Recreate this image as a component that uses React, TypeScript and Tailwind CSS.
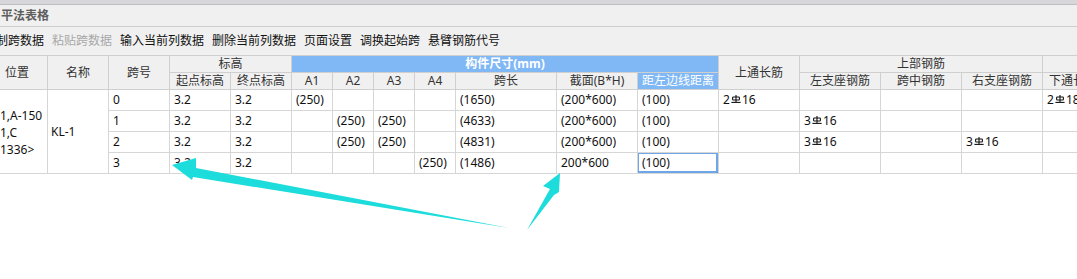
import React from "react";

const font = "font-['Noto_Sans','Noto_Sans_CJK_SC',sans-serif]";

const toolbar = [
  { label: "制跨数据", disabled: false },
  { label: "粘贴跨数据", disabled: true },
  { label: "输入当前列数据", disabled: false },
  { label: "删除当前列数据", disabled: false },
  { label: "页面设置", disabled: false },
  { label: "调换起始跨", disabled: false },
  { label: "悬臂钢筋代号", disabled: false },
];

// rebar grade symbol (HRB400)
function Rebar() {
  return (
    <svg width="10" height="8" viewBox="0 0 10 8" className="mb-[3px] mx-[1px] inline-block" fill="none" stroke="#111" strokeWidth="1.1">
      <path d="M5 0 V7.5" />
      <rect x="1.6" y="2" width="6.8" height="3" rx="0.8" />
      <path d="M0.4 7.4 H9.6" />
    </svg>
  );
}

function Bar({ n, d }: { n: string; d: string }) {
  return (
    <span className="inline-flex items-center">
      {n}
      <Rebar />
      {d}
    </span>
  );
}

type Cell = React.ReactNode;

const rows: Cell[][] = [
  ["0", "3.2", "3.2", "(250)", "", "", "", "(1650)", "(200*600)", "(100)", <Bar n="2" d="16" />, "", "", "", <Bar n="2" d="18" />],
  ["1", "3.2", "3.2", "", "(250)", "(250)", "", "(4633)", "(200*600)", "(100)", "", <Bar n="3" d="16" />, "", "", ""],
  ["2", "3.2", "3.2", "", "(250)", "(250)", "", "(4831)", "(200*600)", "(100)", "", <Bar n="3" d="16" />, "", <Bar n="3" d="16" />, ""],
  ["3", "3.2", "3.2", "", "", "", "(250)", "(1486)", "200*600", "(100)", "", "", "", "", ""],
];

const hd = "flex items-center justify-center border-r border-b border-[#cfcfcf] bg-[#f0f0f0] text-[#333] whitespace-nowrap overflow-hidden";
const td = "flex items-center pl-[4px] border-r border-b border-[#d6d6d6] bg-white text-[#111] whitespace-nowrap overflow-hidden";

export default function App() {
  return (
    <div className={`relative w-[1077px] h-[279px] overflow-hidden bg-white text-[12px] ${font}`}>
      <div className="h-[5px] bg-[#d7d7db] border-b border-[#bebec2]" />
      <div className="h-[22px] flex items-center bg-[#f0f0f0] border-b border-[#cdcdcd] pl-[1px]">
        <span className="text-[12px] font-bold text-[#5e5e5e]">平法表格</span>
      </div>
      <div className="h-[28px] flex items-center gap-[8px] bg-[#f0f0f0] ml-[-4px]">
        {toolbar.map((t) => (
          <span key={t.label} className={t.disabled ? "text-[#a8a8a8]" : "text-[#111]"}>
            {t.label}
          </span>
        ))}
      </div>

      <div className="grid w-[1103px] border-t border-[#cfcfcf] grid-cols-[48px_61px_61px_61px_61px_41px_41px_41px_41px_101px_81px_81px_81px_81px_81px_81px_61px] grid-rows-[17px_17px_21px_21px_21px_21px]">
        {/* header row 1 */}
        <div className={`${hd} row-span-2 !justify-start pl-[5px]`}>位置</div>
        <div className={`${hd} row-span-2`}>名称</div>
        <div className={`${hd} row-span-2`}>跨号</div>
        <div className={`${hd} col-span-2`}>标高</div>
        <div className={`${hd} col-span-7 !bg-[#80b8f6] text-white font-bold`}>构件尺寸(mm)</div>
        <div className={`${hd} row-span-2`}>上通长筋</div>
        <div className={`${hd} col-span-3`}>上部钢筋</div>
        <div className={hd} />
        {/* header row 2 */}
        <div className={hd}>起点标高</div>
        <div className={hd}>终点标高</div>
        <div className={hd}>A1</div>
        <div className={hd}>A2</div>
        <div className={hd}>A3</div>
        <div className={hd}>A4</div>
        <div className={hd}>跨长</div>
        <div className={hd}>截面(B*H)</div>
        <div className={`${hd} !bg-[#80b8f6] !text-white`}>距左边线距离</div>
        <div className={hd}>左支座钢筋</div>
        <div className={hd}>跨中钢筋</div>
        <div className={hd}>右支座钢筋</div>
        <div className={hd}>下通长筋</div>

        {/* data */}
        <div className={`${td} row-span-4 !pl-0 leading-[17px]`}>
          <div className="pt-[2px]">
            1,A-150
            <br />
            1,C
            <br />
            1336&gt;
          </div>
        </div>
        <div className={`${td} row-span-4 !pl-[3px]`}>KL-1</div>
        {rows.map((r, ri) =>
          r.map((c, ci) => (
            <div key={`${ri}-${ci}`} className={`${td} ${ri === 3 && ci === 9 ? "relative" : ""}`}>
              {c}
              {ri === 3 && ci === 9 && (
                <>
                  <div className="absolute left-[-1px] top-[-1px] right-0 bottom-0 border-2 border-[#6ea7e9]" />
                  <div className="absolute right-[-2px] bottom-[-2px] w-[3px] h-[3px] bg-[#4f93e0]" />
                </>
              )}
            </div>
          ))
        )}
      </div>

      {/* annotation arrows */}
      <svg className="absolute left-0 top-0 pointer-events-none" width="1077" height="279" viewBox="0 0 1077 279">
        <polygon points="172,165 196,158 196,168 509,228 193,177 192,180" fill="#1cdcdc" />
        <polygon points="560,173 543,186 550,189 527,230 554,195 559,192" fill="#1cdcdc" />
      </svg>
    </div>
  );
}
